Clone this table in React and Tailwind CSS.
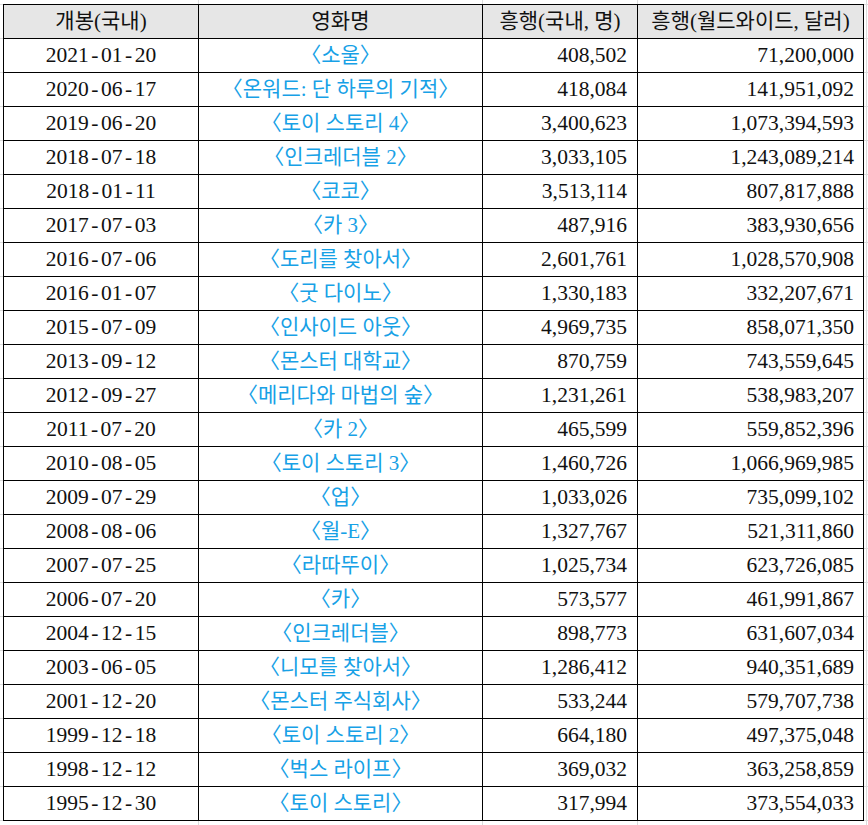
const rows = [
  ["2021-01-20", "〈소울〉", "408,502", "71,200,000"],
  ["2020-06-17", "〈온워드: 단 하루의 기적〉", "418,084", "141,951,092"],
  ["2019-06-20", "〈토이 스토리 4〉", "3,400,623", "1,073,394,593"],
  ["2018-07-18", "〈인크레더블 2〉", "3,033,105", "1,243,089,214"],
  ["2018-01-11", "〈코코〉", "3,513,114", "807,817,888"],
  ["2017-07-03", "〈카 3〉", "487,916", "383,930,656"],
  ["2016-07-06", "〈도리를 찾아서〉", "2,601,761", "1,028,570,908"],
  ["2016-01-07", "〈굿 다이노〉", "1,330,183", "332,207,671"],
  ["2015-07-09", "〈인사이드 아웃〉", "4,969,735", "858,071,350"],
  ["2013-09-12", "〈몬스터 대학교〉", "870,759", "743,559,645"],
  ["2012-09-27", "〈메리다와 마법의 숲〉", "1,231,261", "538,983,207"],
  ["2011-07-20", "〈카 2〉", "465,599", "559,852,396"],
  ["2010-08-05", "〈토이 스토리 3〉", "1,460,726", "1,066,969,985"],
  ["2009-07-29", "〈업〉", "1,033,026", "735,099,102"],
  ["2008-08-06", "〈월-E〉", "1,327,767", "521,311,860"],
  ["2007-07-25", "〈라따뚜이〉", "1,025,734", "623,726,085"],
  ["2006-07-20", "〈카〉", "573,577", "461,991,867"],
  ["2004-12-15", "〈인크레더블〉", "898,773", "631,607,034"],
  ["2003-06-05", "〈니모를 찾아서〉", "1,286,412", "940,351,689"],
  ["2001-12-20", "〈몬스터 주식회사〉", "533,244", "579,707,738"],
  ["1999-12-18", "〈토이 스토리 2〉", "664,180", "497,375,048"],
  ["1998-12-12", "〈벅스 라이프〉", "369,032", "363,258,859"],
  ["1995-12-30", "〈토이 스토리〉", "317,994", "373,554,033"],
];

function DateText({ value }) {
  const parts = value.split("-");
  return (
    <>
      {parts.map((p, i) => (
        <span key={i}>
          {i > 0 && <span className="px-[2.5px]">-</span>}
          {p}
        </span>
      ))}
    </>
  );
}

function Title({ value }) {
  const inner = value.slice(1, -1);
  return (
    <>
      <span className="ml-[-10px]">〈</span>
      {inner}
      <span className="mr-[-10px]">〉</span>
    </>
  );
}

export default function App() {
  const serif = "font-['Liberation_Serif','Noto_Sans_CJK_KR',serif]";
  return (
    <div className="w-[868px] h-[825px] bg-white overflow-hidden bg-[repeating-linear-gradient(to_bottom,#dcdcdc_0px,#dcdcdc_1px,transparent_1px,transparent_34px)] bg-[position:0_4px]">
      <div className="h-[825px] pt-[4px] pl-[3px] bg-[linear-gradient(to_right,transparent_198px,#dcdcdc_198px,#dcdcdc_199px,transparent_199px,transparent_482px,#dcdcdc_482px,#dcdcdc_483px,transparent_483px,transparent_637px,#dcdcdc_637px,#dcdcdc_638px,transparent_638px,transparent_866px,#dcdcdc_866px,#dcdcdc_867px,transparent_867px)]">
        <table className="border-collapse table-fixed bg-white text-[#111]">
          <colgroup>
            <col className="w-[195px]" />
            <col className="w-[284px]" />
            <col className="w-[155px]" />
            <col className="w-[226px]" />
          </colgroup>
          <thead>
            <tr className="h-[34px] bg-[#e6e6e6]">
              {["개봉(국내)", "영화명", "흥행(국내, 명)", "흥행(월드와이드, 달러)"].map((h) => (
                <th
                  key={h}
                  className={`border border-black p-0 text-center font-normal text-[21px] leading-none ${serif}`}
                >
                  {h}
                </th>
              ))}
            </tr>
          </thead>
          <tbody>
            {rows.map((r) => (
              <tr key={r[0]} className="h-[34px]">
                <td className={`border border-black p-0 text-center text-[21.5px] leading-none ${serif}`}>
                  <DateText value={r[0]} />
                </td>
                <td className={`border border-black p-0 text-center text-[21px] leading-none text-[#17a1e6] ${serif}`}>
                  <Title value={r[1]} />
                </td>
                <td className={`border border-black p-0 pr-[10px] text-right text-[21.5px] leading-none ${serif}`}>
                  {r[2]}
                </td>
                <td className={`border border-black p-0 pr-[9px] text-right text-[21.5px] leading-none ${serif}`}>
                  {r[3]}
                </td>
              </tr>
            ))}
          </tbody>
        </table>
      </div>
    </div>
  );
}
